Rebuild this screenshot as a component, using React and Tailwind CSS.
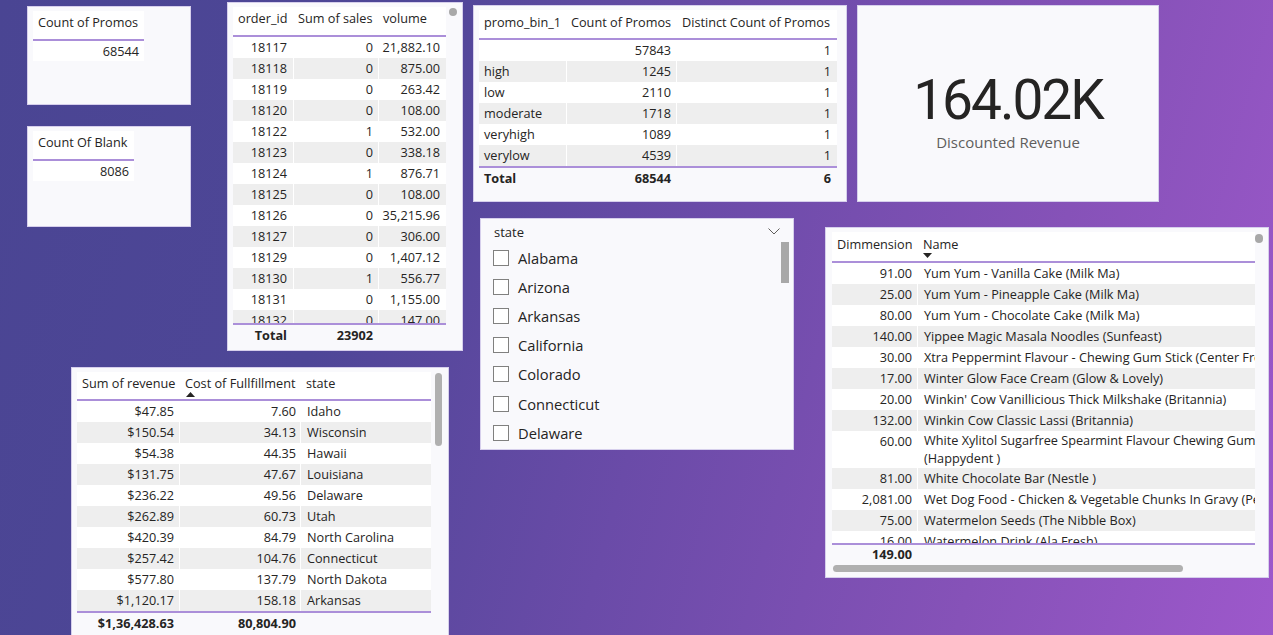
import React from "react";

const orders = [
  ["18117", "0", "21,882.10"],
  ["18118", "0", "875.00"],
  ["18119", "0", "263.42"],
  ["18120", "0", "108.00"],
  ["18122", "1", "532.00"],
  ["18123", "0", "338.18"],
  ["18124", "1", "876.71"],
  ["18125", "0", "108.00"],
  ["18126", "0", "35,215.96"],
  ["18127", "0", "306.00"],
  ["18129", "0", "1,407.12"],
  ["18130", "1", "556.77"],
  ["18131", "0", "1,155.00"],
  ["18132", "0", "147.00"],
];

const promos = [
  ["", "57843", "1"],
  ["high", "1245", "1"],
  ["low", "2110", "1"],
  ["moderate", "1718", "1"],
  ["veryhigh", "1089", "1"],
  ["verylow", "4539", "1"],
];

const revenue = [
  ["$47.85", "7.60", "Idaho"],
  ["$150.54", "34.13", "Wisconsin"],
  ["$54.38", "44.35", "Hawaii"],
  ["$131.75", "47.67", "Louisiana"],
  ["$236.22", "49.56", "Delaware"],
  ["$262.89", "60.73", "Utah"],
  ["$420.39", "84.79", "North Carolina"],
  ["$257.42", "104.76", "Connecticut"],
  ["$577.80", "137.79", "North Dakota"],
  ["$1,120.17", "158.18", "Arkansas"],
];

const products = [
  ["91.00", "Yum Yum - Vanilla Cake (Milk Ma)"],
  ["25.00", "Yum Yum - Pineapple Cake (Milk Ma)"],
  ["80.00", "Yum Yum - Chocolate Cake (Milk Ma)"],
  ["140.00", "Yippee Magic Masala Noodles (Sunfeast)"],
  ["30.00", "Xtra Peppermint Flavour - Chewing Gum Stick (Center Fresh)"],
  ["17.00", "Winter Glow Face Cream (Glow & Lovely)"],
  ["20.00", "Winkin' Cow Vanillicious Thick Milkshake (Britannia)"],
  ["132.00", "Winkin Cow Classic Lassi (Britannia)"],
  ["60.00", "White Xylitol Sugarfree Spearmint Flavour Chewing Gum", "(Happydent )"],
  ["81.00", "White Chocolate Bar (Nestle )"],
  ["2,081.00", "Wet Dog Food - Chicken & Vegetable Chunks In Gravy (Pedigree)"],
  ["75.00", "Watermelon Seeds (The Nibble Box)"],
  ["16.00", "Watermelon Drink (Ala Fresh)"],
];

const states = ["Alabama", "Arizona", "Arkansas", "California", "Colorado", "Connecticut", "Delaware"];

function CountCard({ top, height, boxWidth, title, value }) {
  return (
    <div
      className="absolute left-[27px] w-[164px] bg-[#f9f9fc] border border-[#d6cfec] pl-[5px] pt-[4px] text-[12.7px]"
      style={{ top, height }}
    >
      <div style={{ width: boxWidth }}>
        <div className="h-[30px] bg-white border-b-2 border-[#ab8fd9] pl-[5px] pt-[2px] leading-[18px] whitespace-nowrap">
          {title}
        </div>
        <div className="h-[20px] bg-white text-right pr-[5px] leading-[21px]">{value}</div>
      </div>
    </div>
  );
}

function UpArrow() {
  return (
    <svg width="9" height="5" viewBox="0 0 9 5" className="block ml-[1px]">
      <polygon points="0,5 4.5,0 9,5" fill="#252423" />
    </svg>
  );
}

function DownArrow() {
  return (
    <svg width="9" height="5" viewBox="0 0 9 5" className="block">
      <polygon points="0,0 4.5,5 9,0" fill="#252423" />
    </svg>
  );
}

export default function App() {
  return (
    <div className="relative w-[1273px] h-[635px] overflow-hidden bg-[linear-gradient(105deg,#4a4593_0%,#4e4697_28%,#6a4ba8_52%,#8652b8_78%,#9d58cb_100%)] font-['Open_Sans',sans-serif] text-[#252423]">
      {/* Count cards */}
      <CountCard top={6} height={99} boxWidth={111} title="Count of Promos" value="68544" />
      <CountCard top={126} height={101} boxWidth={101} title="Count Of Blank" value="8086" />

      {/* Order table */}
      <div className="absolute left-[227px] top-[2px] w-[236px] h-[349px] bg-[#f9f9fc] border border-[#d6cfec] pl-[5px] pt-[4px] text-[12.7px]">
        <div className="w-[213px]">
          <div className="grid grid-cols-[60px_85px_68px] h-[30px] bg-white border-b-2 border-[#ab8fd9] pt-[2px] leading-[18px] whitespace-nowrap">
            <div className="pl-[5px]">order_id</div>
            <div className="pl-[5px]">Sum of sales</div>
            <div className="pl-[5px]">volume</div>
          </div>
          <div className="h-[286px] overflow-hidden">
            {orders.map((r, i) => (
              <div
                key={r[0]}
                className={`grid grid-cols-[60px_85px_68px] h-[21px] leading-[21px] ${i % 2 ? "bg-[#eeeeee]" : "bg-white"}`}
              >
                <div className="text-right pr-[6px]">{r[0]}</div>
                <div className="text-right pr-[5px] border-l border-white">{r[1]}</div>
                <div className="text-right pr-[6px] border-l border-white">{r[2]}</div>
              </div>
            ))}
          </div>
          <div className="grid grid-cols-[60px_85px_68px] h-[22px] border-t-2 border-[#ab8fd9] leading-[20px] font-bold">
            <div className="text-right pr-[6px]">Total</div>
            <div className="text-right pr-[5px]">23902</div>
            <div></div>
          </div>
        </div>
        <div className="absolute left-[221px] top-[5px] w-[8px] h-[8px] rounded-full bg-[#a8a8a8]"></div>
      </div>

      {/* Promo bin table */}
      <div className="absolute left-[473px] top-[5px] w-[374px] h-[197px] bg-[#f9f9fc] border border-[#d6cfec] pl-[5px] pt-[4px] text-[12.7px]">
        <div className="w-[358px]">
          <div className="grid grid-cols-[87px_110px_161px] h-[30px] bg-white border-b-2 border-[#ab8fd9] pt-[3px] leading-[18px] whitespace-nowrap">
            <div className="pl-[5px]">promo_bin_1</div>
            <div className="pl-[5px]">Count of Promos</div>
            <div className="pl-[6px]">Distinct Count of Promos</div>
          </div>
          {promos.map((r, i) => (
            <div
              key={i}
              className={`grid grid-cols-[87px_110px_161px] h-[21px] leading-[21px] ${i % 2 ? "bg-[#eeeeee]" : "bg-white"}`}
            >
              <div className="pl-[5px]">{r[0]}</div>
              <div className="text-right pr-[5px] border-l border-white">{r[1]}</div>
              <div className="text-right pr-[6px] border-l border-white">{r[2]}</div>
            </div>
          ))}
          <div className="grid grid-cols-[87px_110px_161px] h-[22px] border-t-2 border-[#ab8fd9] leading-[20px] font-bold">
            <div className="pl-[5px]">Total</div>
            <div className="text-right pr-[5px]">68544</div>
            <div className="text-right pr-[6px]">6</div>
          </div>
        </div>
      </div>

      {/* KPI card */}
      <div className="absolute left-[857px] top-[5px] w-[302px] h-[197px] bg-[#f9f9fc] border border-[#d6cfec] flex flex-col items-center pt-[66px]">
        <div className="font-['Roboto',sans-serif] text-[55px] leading-[56px] tracking-[-2px] text-[#252423]">164.02K</div>
        <div className="mt-[4px] text-[15px] leading-[20px] text-[#605e5c]">Discounted Revenue</div>
      </div>

      {/* State slicer */}
      <div className="absolute left-[480px] top-[218px] w-[314px] h-[232px] bg-[#f9f9fc] border border-[#d6cfec] pt-[3px]">
        <div className="flex items-start justify-between h-[21px] pl-[13px] pr-[13px]">
          <span className="text-[13px] leading-[18px] pt-[1px]">state</span>
          <svg width="12" height="7" viewBox="0 0 12 7" className="block mt-[6px]">
            <polyline points="0.5,0.5 6,6 11.5,0.5" fill="none" stroke="#605e5c" strokeWidth="1" />
          </svg>
        </div>
        <div className="flex flex-col">
          {states.map((s) => (
            <div key={s} className="flex items-center h-[29.2px] pl-[12px] gap-[9px]">
              <div className="w-[16px] h-[16px] border border-[#80807f] bg-white"></div>
              <span className="text-[14.7px] leading-[20px]">{s}</span>
            </div>
          ))}
        </div>
        <div className="absolute left-[300px] top-[23px] w-[8px] h-[41px] bg-[#a8a8a8]"></div>
      </div>

      {/* Revenue table */}
      <div className="absolute left-[71px] top-[367px] w-[378px] h-[290px] bg-[#f9f9fc] border border-[#d6cfec] pl-[5px] pt-[4px] text-[12.7px]">
        <div className="w-[354px]">
          <div className="grid grid-cols-[102px_121px_131px] h-[29px] bg-white border-b-2 border-[#ab8fd9] pt-[2px] leading-[18px] whitespace-nowrap">
            <div className="pl-[5px]">Sum of revenue</div>
            <div className="pl-[6px]">
              <div>Cost of Fullfillment</div>
              <UpArrow />
            </div>
            <div className="pl-[6px]">state</div>
          </div>
          {revenue.map((r, i) => (
            <div
              key={r[2]}
              className={`grid grid-cols-[102px_121px_131px] h-[21px] leading-[21px] ${i % 2 ? "bg-[#eeeeee]" : "bg-white"}`}
            >
              <div className="text-right pr-[5px]">{r[0]}</div>
              <div className="text-right pr-[4px] border-l border-white">{r[1]}</div>
              <div className="pl-[6px] border-l border-white">{r[2]}</div>
            </div>
          ))}
          <div className="grid grid-cols-[102px_121px_131px] h-[23px] border-t-2 border-[#ab8fd9] leading-[21px] font-bold">
            <div className="text-right pr-[5px]">$1,36,428.63</div>
            <div className="text-right pr-[4px]">80,804.90</div>
            <div></div>
          </div>
        </div>
        <div className="absolute left-[363px] top-[5px] w-[7px] h-[73px] rounded-full bg-[#b0b0b0]"></div>
      </div>

      {/* Product table */}
      <div className="absolute left-[825px] top-[227px] w-[444px] h-[351px] bg-[#f9f9fc] border border-[#d6cfec] pl-[6px] pt-[4px] text-[12.7px]">
        <div className="w-[423px] overflow-hidden">
          <div className="grid grid-cols-[85px_1fr] h-[31px] bg-white border-b-2 border-[#ab8fd9] pt-[3px] leading-[18px] whitespace-nowrap">
            <div className="pl-[5px]">Dimmension</div>
            <div className="pl-[6px]">
              <div>Name</div>
              <DownArrow />
            </div>
          </div>
          <div className="h-[280px] overflow-hidden">
            {products.map((r, i) => (
              <div
                key={r[1]}
                className={`grid grid-cols-[85px_1fr] ${r[2] ? "h-[37px]" : "h-[21px]"} ${i % 2 ? "bg-[#eeeeee]" : "bg-white"}`}
              >
                <div className="text-right pr-[5px] leading-[21px]">{r[0]}</div>
                <div className="pl-[6px] border-l border-white whitespace-nowrap overflow-hidden">
                  {r[2] ? (
                    <div className="pt-[1px] leading-[17.5px]">
                      <div>{r[1]}</div>
                      <div>{r[2]}</div>
                    </div>
                  ) : (
                    <div className="leading-[21px]">{r[1]}</div>
                  )}
                </div>
              </div>
            ))}
          </div>
          <div className="grid grid-cols-[85px_1fr] h-[21px] border-t-2 border-[#ab8fd9] leading-[19px] font-bold">
            <div className="text-right pr-[5px]">149.00</div>
            <div></div>
          </div>
        </div>
        <div className="absolute left-[7px] top-[337px] w-[350px] h-[7px] rounded-full bg-[#b0b0b0]"></div>
        <div className="absolute left-[429px] top-[6px] w-[8px] h-[9px] rounded-full bg-[#a8a8a8]"></div>
      </div>
    </div>
  );
}
